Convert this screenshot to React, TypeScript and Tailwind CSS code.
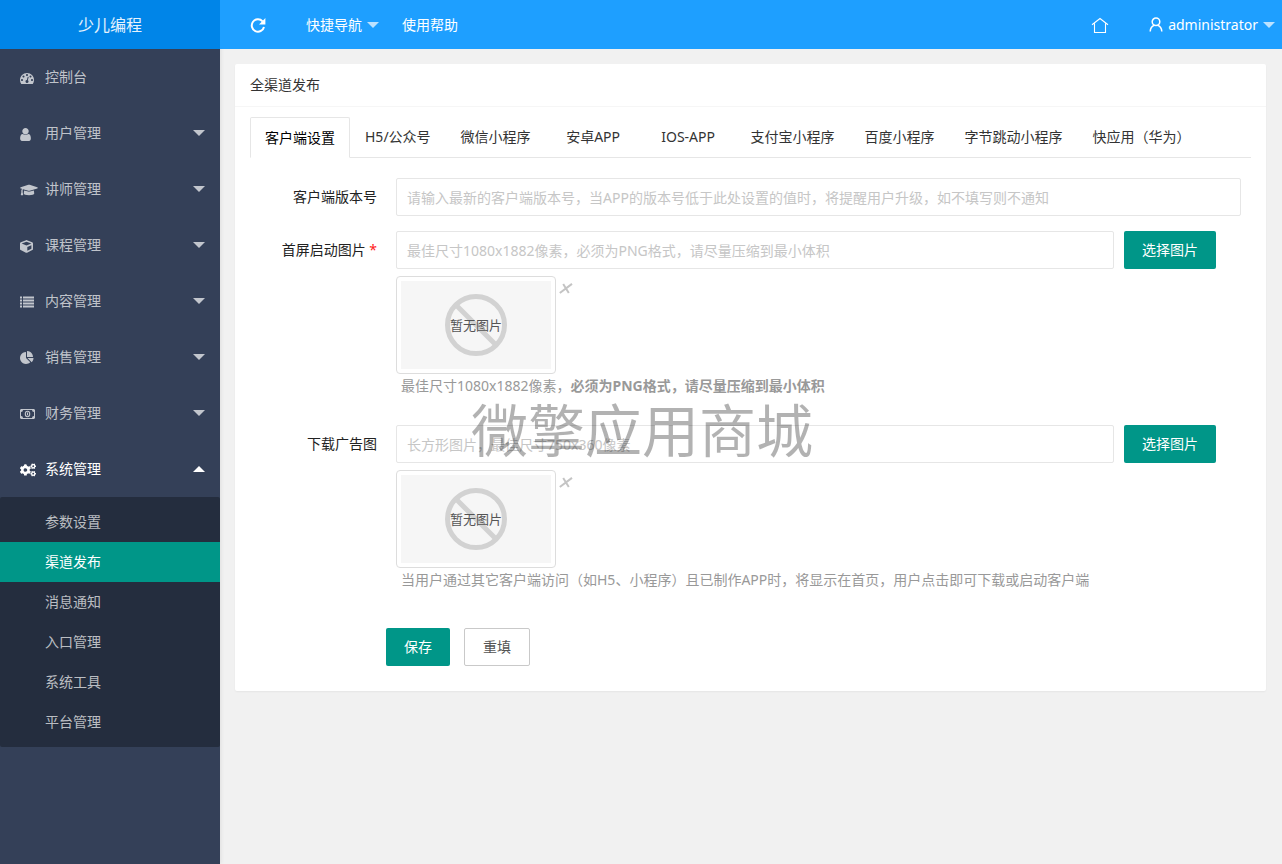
import type { ReactNode } from 'react';
import { clsx } from 'clsx';
import { FaCogs, FaCube, FaGraduationCap } from 'react-icons/fa';

type MenuItem = {
    label: string;
    icon: ReactNode;
    expandable?: boolean;
    children?: string[];
};

/* ---------- Icons ---------- */

const DashboardIcon = () => (
    <svg viewBox="0 0 1792 1792" className="size-3.5" fill="currentColor">
        <path d="M384 1152q0-53-37.5-90.5t-90.5-37.5-90.5 37.5-37.5 90.5 37.5 90.5 90.5 37.5 90.5-37.5 37.5-90.5zm192-448q0-53-37.5-90.5t-90.5-37.5-90.5 37.5-37.5 90.5 37.5 90.5 90.5 37.5 90.5-37.5 37.5-90.5zm428 481l101-382q6-26-7.5-48.5t-38.5-29.5-48 6.5-30 39.5l-101 382q-60 5-107 43.5t-63 98.5q-20 77 20 146t117 89 146-20 89-117q16-60-6-117t-72-91zm660-33q0-53-37.5-90.5t-90.5-37.5-90.5 37.5-37.5 90.5 37.5 90.5 90.5 37.5 90.5-37.5 37.5-90.5zm-640-640q0-53-37.5-90.5t-90.5-37.5-90.5 37.5-37.5 90.5 37.5 90.5 90.5 37.5 90.5-37.5 37.5-90.5zm448 192q0-53-37.5-90.5t-90.5-37.5-90.5 37.5-37.5 90.5 37.5 90.5 90.5 37.5 90.5-37.5 37.5-90.5zm320 448q0 261-141 483-19 29-54 29h-1402q-35 0-54-29-141-221-141-483 0-182 71-348t191-286 286-191 348-71 348 71 286 191 191 286 71 348z" />
    </svg>
);

const UserIcon = () => (
    <svg viewBox="256 0 1280 1792" className="h-[15px] w-[11px]" fill="currentColor">
        <path d="M1536 1399q0 109-62.5 187t-150.5 78h-854q-88 0-150.5-78t-62.5-187q0-85 8.5-160.5t31.5-152 58.5-131 94-89 134.5-34.5q131 128 313 128t313-128q76 0 134.5 34.5t94 89 58.5 131 31.5 152 8.5 160.5zm-256-887q0 159-112.5 271.5t-271.5 112.5-271.5-112.5-112.5-271.5 112.5-271.5 271.5-112.5 271.5 112.5 112.5 271.5z" />
    </svg>
);

const ListIcon = () => (
    <svg viewBox="0 0 14 12" className="h-3 w-3.5" fill="currentColor">
        {[0, 3, 6, 9].map((y) => (
            <path key={y} d={`M0 ${y + 0.5}h2v2h-2zM3 ${y + 0.5}h11v2h-11z`} />
        ))}
    </svg>
);

const PieIcon = () => (
    <svg viewBox="0 0 1792 1792" className="size-3.5" fill="currentColor">
        <path d="M768 890l546 546q-106 108-247.5 168t-298.5 60q-209 0-385.5-103t-279.5-279.5-103-385.5 103-385.5 279.5-279.5 385.5-103v762zm187 6h773q0 157-60 298.5t-168 247.5zm709-128h-768v-768q209 0 385.5 103t279.5 279.5 103 385.5z" />
    </svg>
);

const MoneyIcon = () => (
    <svg viewBox="0 0 15 10" className="h-2.5 w-[15px]" fill="none" stroke="currentColor">
        <rect x="0.5" y="0.5" width="14" height="9" rx="0.5" />
        <path d="M1 3a2 2 0 0 0 2-2H1zM14 3a2 2 0 0 1-2-2h2zM1 7a2 2 0 0 1 2 2H1zM14 7a2 2 0 0 0-2 2h2z" fill="currentColor" stroke="none" />
        <ellipse cx="7.5" cy="5" rx="2.2" ry="2.7" strokeWidth="1.1" />
        <path d="M7 3.6h1v2.6h-1z" fill="currentColor" stroke="none" />
    </svg>
);

const RefreshIcon = () => (
    <svg viewBox="0 0 16 16" className="size-4" fill="none" stroke="currentColor" strokeWidth="2">
        <path d="M14 9.9A6.2 6.2 0 1 1 12.6 4.3" />
        <path d="M15.4 1.1v6.4H9z" fill="currentColor" stroke="none" />
    </svg>
);

const HomeIcon = () => (
    <svg viewBox="0 0 18 16" className="h-4 w-[18px]" fill="none" stroke="currentColor">
        <path d="M1 7.7L9 1.5l8 6.2M3.5 6.5v9h11v-9" strokeWidth="1.1" />
    </svg>
);

const PersonIcon = () => (
    <svg viewBox="0 0 14 15" className="h-[15px] w-3.5" fill="none" stroke="currentColor" strokeWidth="1.5">
        <circle cx="7" cy="4.8" r="3.8" />
        <path d="M1.2 14.5C1.4 11 3 8.9 5.4 8.2M12.8 14.5C12.6 11 11 8.9 8.6 8.2" />
    </svg>
);

const Caret = ({ up = false }: { up?: boolean }) => (
    <svg viewBox="0 0 12 6" className={clsx('h-1.5 w-3', up && 'rotate-180')} fill="currentColor">
        <path d="M0 0h12L6 6z" />
    </svg>
);

/* ---------- Data ---------- */

const MENU: MenuItem[] = [
    { label: '控制台', icon: <DashboardIcon /> },
    { label: '用户管理', icon: <UserIcon />, expandable: true },
    { label: '讲师管理', icon: <FaGraduationCap className="h-3.5 w-[18px]" />, expandable: true },
    { label: '课程管理', icon: <FaCube className="size-[13px]" />, expandable: true },
    { label: '内容管理', icon: <ListIcon />, expandable: true },
    { label: '销售管理', icon: <PieIcon />, expandable: true },
    { label: '财务管理', icon: <MoneyIcon />, expandable: true },
    {
        label: '系统管理',
        icon: <FaCogs className="h-3.5 w-4" />,
        expandable: true,
        children: ['参数设置', '渠道发布', '消息通知', '入口管理', '系统工具', '平台管理'],
    },
];

const ACTIVE_CHILD = '渠道发布';

const TABS = [
    '客户端设置',
    'H5/公众号',
    '微信小程序',
    '安卓APP',
    'IOS-APP',
    '支付宝小程序',
    '百度小程序',
    '字节跳动小程序',
    '快应用（华为）',
];

/* ---------- Layout parts ---------- */

const Sidebar = () => (
    <aside className="w-[220px] shrink-0 bg-[#344058] text-white/70 shadow-[1px_0_4px_rgba(0,0,0,0.08)]">
        <div className="flex h-[49px] items-center justify-center bg-[#0085e8] text-base text-white/90">少儿编程</div>
        <nav>
            {MENU.map((item) => (
                <div key={item.label}>
                    <button
                        type="button"
                        className={clsx('flex h-14 w-full items-center pr-[15px] pl-5', item.children && 'text-white')}
                    >
                        <span className="flex w-[25px] shrink-0 pt-0.5">{item.icon}</span>
                        <span className="flex-1 text-left">{item.label}</span>
                        {item.expandable && <Caret up={!!item.children} />}
                    </button>
                    {item.children && (
                        <ul className="rounded-xs bg-[#242d3e] py-[5px]">
                            {item.children.map((child) => (
                                <li key={child}>
                                    <a
                                        href="#"
                                        className={clsx(
                                            'flex h-10 items-center pl-[45px]',
                                            child === ACTIVE_CHILD && 'bg-[#009688] text-white'
                                        )}
                                    >
                                        {child}
                                    </a>
                                </li>
                            ))}
                        </ul>
                    )}
                </div>
            ))}
        </nav>
    </aside>
);

const TopBar = () => (
    <header className="flex h-[49px] items-center bg-[#1e9fff] pr-[7px] pl-[30px] text-white">
        <button type="button" aria-label="刷新">
            <RefreshIcon />
        </button>
        <button type="button" className="ml-10 flex items-center gap-[5px]">
            快捷导航
            <span className="text-white/70"><Caret /></span>
        </button>
        <a href="#" className="ml-[23px]">使用帮助</a>
        <div className="ml-auto flex items-center gap-10">
            <a href="#" aria-label="首页">
                <HomeIcon />
            </a>
            <button type="button" className="flex items-center gap-[5px]">
                <PersonIcon />
                administrator
                <span className="text-white/70"><Caret /></span>
            </button>
        </div>
    </header>
);

const EmptyImage = () => (
    <div className="mt-[7px] flex items-start gap-[3px]">
        <div className="h-[98px] w-40 rounded-sm border border-[#ddd] p-1">
            <div className="relative flex h-full items-center justify-center bg-[#f6f6f6]">
                <svg viewBox="0 0 62 62" className="size-[62px]" fill="none" stroke="#d2d2d2" strokeWidth="5">
                    <circle cx="31" cy="31" r="28.5" />
                    <path d="M11 11l40 40" />
                </svg>
                <span className="absolute text-[13px] leading-4 text-[#555]">暂无图片</span>
            </div>
        </div>
        <button type="button" aria-label="删除图片" className="mt-[7px]">
            <svg viewBox="0 0 14 11" className="h-[11px] w-3.5" fill="none" stroke="#c4c4c4" strokeWidth="2">
                <path d="M0.8 10L13 0.9M4.2 1l5.6 9" />
            </svg>
        </button>
    </div>
);

const FIELD = 'h-[38px] w-full min-w-0 rounded-xs border border-[#e6e6e6] px-2.5 outline-none placeholder:text-[#c6c6c6]';
const LABEL = 'w-[146px] shrink-0 pr-[19px] text-right leading-[38px]';

type ImageFieldProps = {
    id: string;
    label: string;
    placeholder: string;
    required?: boolean;
    children: ReactNode;
};

const ImageField = ({ id, label, placeholder, required, children }: ImageFieldProps) => (
    <div className="flex">
        <label htmlFor={id} className={LABEL}>
            {label}
            {required && <span className="text-[#ff2020]"> *</span>}
        </label>
        <div className="min-w-0 flex-1 pr-[25px]">
            <div className="flex gap-2.5">
                <input id={id} type="text" placeholder={placeholder} className={FIELD} />
                <button type="button" className="h-[38px] shrink-0 rounded-xs bg-[#009688] px-[18px] text-white">
                    选择图片
                </button>
            </div>
            <EmptyImage />
            <p className="pl-[5px] leading-6 text-[#999]">{children}</p>
        </div>
    </div>
);

export default function App() {
    return (
        <div className="flex min-h-screen bg-[#f1f1f1] font-['Noto_Sans','Noto_Sans_CJK_SC',sans-serif] text-sm text-[#222]">
            <Sidebar />
            <div className="min-w-0 flex-1">
                <TopBar />
                <main className="py-[15px] pr-4 pl-[15px]">
                    <section className="relative rounded-xs bg-white shadow-[0_1px_2px_rgba(0,0,0,0.05)]">
                        <h1 className="flex h-[43px] items-center border-b border-[#f6f6f6] px-[15px] text-[#333]">全渠道发布</h1>
                        <div className="px-[15px] pt-2.5 pb-[25px]">
                            <div role="tablist" className="flex h-[41px] border-b border-[#e6e6e6]">
                                {TABS.map((tab, i) => (
                                    <button
                                        key={tab}
                                        type="button"
                                        role="tab"
                                        aria-selected={i === 0}
                                        className={clsx(
                                            'min-w-[95px] shrink-0',
                                            i === 0
                                                ? '-mb-px rounded-t-xs border border-[#e6e6e6] border-b-white px-3.5 text-black'
                                                : 'px-[15px] text-[#333]'
                                        )}
                                    >
                                        {tab}
                                    </button>
                                ))}
                            </div>

                            <form className="pt-5 pr-2.5">
                                <div className="mb-[15px] flex">
                                    <label htmlFor="version" className={LABEL}>客户端版本号</label>
                                    <input
                                        id="version"
                                        type="text"
                                        placeholder="请输入最新的客户端版本号，当APP的版本号低于此处设置的值时，将提醒用户升级，如不填写则不通知"
                                        className={FIELD}
                                    />
                                </div>
                                <ImageField
                                    id="splash"
                                    label="首屏启动图片"
                                    placeholder="最佳尺寸1080x1882像素，必须为PNG格式，请尽量压缩到最小体积"
                                    required
                                >
                                    最佳尺寸1080x1882像素，<b>必须为PNG格式，请尽量压缩到最小体积</b>
                                </ImageField>
                                <div className="mt-[27px]">
                                    <ImageField id="banner" label="下载广告图" placeholder="长方形图片，最佳尺寸750x360像素">
                                        当用户通过其它客户端访问（如H5、小程序）且已制作APP时，将显示在首页，用户点击即可下载或启动客户端
                                    </ImageField>
                                </div>
                                <div className="mt-9 flex gap-3.5 pl-[136px]">
                                    <button type="submit" className="h-[38px] rounded-xs bg-[#009688] px-[18px] text-white">
                                        保存
                                    </button>
                                    <button type="reset" className="h-[38px] rounded-xs border border-[#c9c9c9] px-[18px] text-[#555]">
                                        重填
                                    </button>
                                </div>
                            </form>
                        </div>
                        {/* Watermark */}
                        <span className="pointer-events-none absolute top-[338px] left-[236px] text-[57px] leading-none font-normal text-black/30">
                            微擎应用商城
                        </span>
                    </section>
                </main>
            </div>
        </div>
    );
}
